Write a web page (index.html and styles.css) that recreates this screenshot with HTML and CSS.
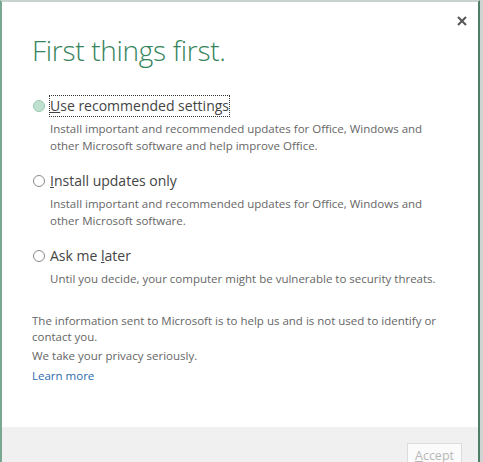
FILE: index.html
```html
<!DOCTYPE html>
<html>
<head>
<meta charset="utf-8">
<link rel="stylesheet" href="styles.css">
</head>
<body>
<div class="window">
  <button class="close" aria-label="Close">
    <svg width="10" height="10" viewBox="0 0 10 10"><path d="M1 1 L9 9 M9 1 L1 9" stroke="#555" stroke-width="2"/></svg>
  </button>
  <div class="content">
    <h1 class="title">First things first.</h1>
    <div class="options">
      <div class="option">
        <div class="row">
          <span class="radio checked"></span>
          <span class="label focused"><u>U</u>se recommended settings</span>
        </div>
        <p class="desc">Install important and recommended updates for Office, Windows and<br>other Microsoft software and help improve Office.</p>
      </div>
      <div class="option">
        <div class="row">
          <span class="radio"></span>
          <span class="label"><u>I</u>nstall updates only</span>
        </div>
        <p class="desc">Install important and recommended updates for Office, Windows and<br>other Microsoft software.</p>
      </div>
      <div class="option">
        <div class="row">
          <span class="radio"></span>
          <span class="label">Ask me <u>l</u>ater</span>
        </div>
        <p class="desc">Until you decide, your computer might be vulnerable to security threats.</p>
      </div>
    </div>
    <div class="info">
      <p>The information sent to Microsoft is to help us and is not used to identify or<br>contact you.</p>
      <p>We take your privacy seriously.</p>
      <a class="link" href="#">Learn more</a>
    </div>
  </div>
  <div class="footer">
    <button class="accept" disabled><u>A</u>ccept</button>
  </div>
</div>
</body>
</html>
```
FILE: styles.css
```css
html, body {
  margin: 0;
  padding: 0;
  background: #cfd3d1;
  font-family: "Open Sans", "Noto Sans", sans-serif;
}
.window {
  position: relative;
  box-sizing: border-box;
  width: 480px;
  height: 462px;
  background: #fff;
  border-left: 2px solid #7aa792;
  border-top: 2px solid #c9d3ce;
  border-right: 2px solid #4d7f66;
  display: flex;
  flex-direction: column;
}
.close {
  position: absolute;
  top: 13px;
  right: 10px;
  border: 0;
  background: none;
  padding: 0;
  width: 12px;
  height: 12px;
  display: flex;
  align-items: center;
  justify-content: center;
}
.content {
  padding: 0 0 0 30px;
  flex: 1;
}
.title {
  margin: 28px 0 0 0;
  font-weight: 300;
  font-size: 28px;
  line-height: 40px;
  color: #35845c;
  letter-spacing: -0.3px;
}
.options {
  margin-top: 25px;
  display: flex;
  flex-direction: column;
  gap: 16px;
}
.row {
  display: flex;
  align-items: center;
  height: 22px;
}
.radio {
  box-sizing: border-box;
  width: 12px;
  height: 12px;
  border: 1px solid #8a8a8a;
  border-radius: 50%;
  margin: 0 4px 0 1px;
  background: #fff;
}
.radio.checked {
  background: #bfe1cf;
  border-color: #9cc9b2;
}
.label {
  font-size: 14px;
  color: #444;
  padding: 0;
  line-height: 20px;
  border: 1px solid transparent;
}
.label.focused {
  border: 1px dotted #333;
}
.desc {
  margin: 3px 0 0 18px;
  font-size: 11.5px;
  line-height: 17px;
  color: #666;
  white-space: nowrap;
}
.info {
  margin-top: 26px;
  font-size: 11.5px;
  line-height: 16px;
  color: #666;
  white-space: nowrap;
}
.info p {
  margin: 0 0 3px 0;
}
.link {
  color: #2b6cb0;
  text-decoration: none;
  display: inline-block;
  margin-top: 1px;
}
.footer {
  height: 35px;
  background: #f0f0f0;
  display: flex;
  justify-content: flex-end;
  align-items: flex-start;
  padding-right: 16px;
}
.accept {
  margin-top: 16px;
  width: 55px;
  height: 24px;
  background: #fbfbfb;
  border: 1px solid #dcdcdc;
  color: #b8b8b8;
  font-family: inherit;
  font-size: 12.5px;
  padding: 0;
}
```
